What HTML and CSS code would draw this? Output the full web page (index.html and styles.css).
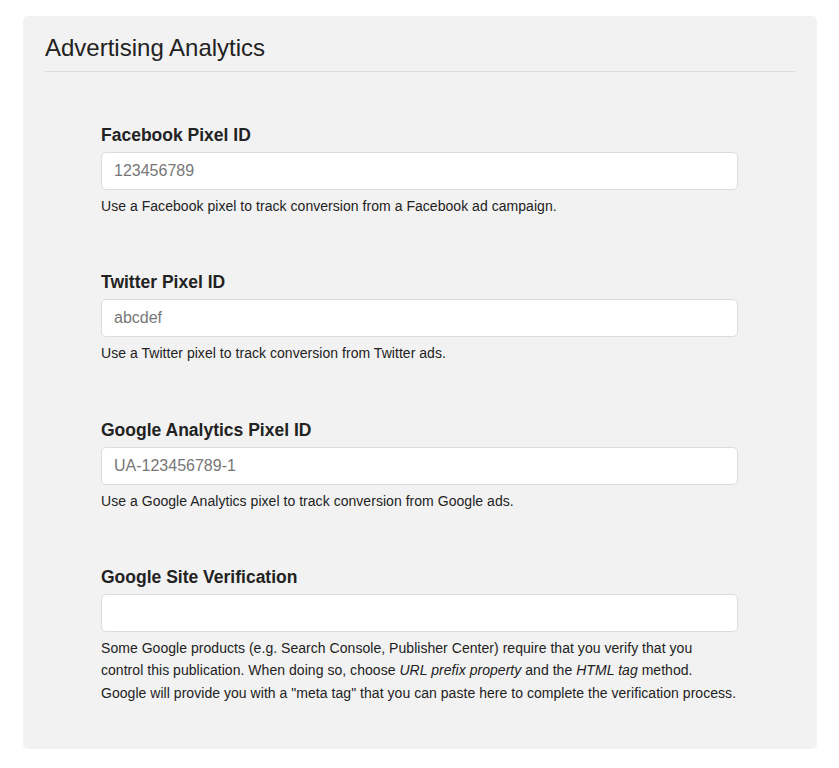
FILE: index.html
```html
<html lang="en">
<head>
    <meta charset="UTF-8">
    <meta name="viewport" content="width=device-width, initial-scale=1.0">
    <title>Advertising Analytics</title>
    <link rel="stylesheet" href="styles.css">
</head>
<body>
    <div class="panel">
        <h2 class="panel-title">Advertising Analytics</h2>
        <div class="form">
            <div class="form-group">
                <label for="facebookPixel">Facebook Pixel ID</label>
                <input type="text" id="facebookPixel" class="input-field" placeholder="123456789">
                <p class="help">Use a Facebook pixel to track conversion from a Facebook ad campaign.</p>
            </div>

            <div class="form-group">
                <label for="twitterPixel">Twitter Pixel ID</label>
                <input type="text" id="twitterPixel" class="input-field" placeholder="abcdef">
                <p class="help">Use a Twitter pixel to track conversion from Twitter ads.</p>
            </div>

            <div class="form-group">
                <label for="googlePixel">Google Analytics Pixel ID</label>
                <input type="text" id="googlePixel" class="input-field" placeholder="UA-123456789-1">
                <p class="help">Use a Google Analytics pixel to track conversion from Google ads.</p>
            </div>

            <div class="form-group last">
                <label for="googleVerification">Google Site Verification</label>
                <input type="text" id="googleVerification" class="input-field">
                <p class="help">Some Google products (e.g. Search Console, Publisher Center) require that you verify that you<br>
                control this publication. When doing so, choose <em>URL prefix property</em> and the <em>HTML tag</em> method.<br>
                Google will provide you with a "meta tag" that you can paste here to complete the verification process.</p>
            </div>
        </div>
    </div>
</body>
</html>
```

FILE: styles.css
```css
body {
    font-family: "Liberation Sans", Arial, sans-serif;
    color: #222;
    background-color: white;
    margin: 0;
}
.panel {
    background-color: #f2f2f2;
    border-radius: 5px;
    margin: 16px 22px 0 23px;
    padding: 18px 22px 45px 22px;
}
.panel-title {
    font-size: 24px;
    font-weight: normal;
    line-height: 1.2;
    margin: 0;
    padding-bottom: 8px;
    border-bottom: 1px solid #dcdcdc;
}
.form {
    padding: 51px 57px 0 56px;
}
.form-group {
    display: flex;
    flex-direction: column;
    margin-bottom: 53px;
}
.form-group.last {
    margin-bottom: 0;
}
.form-group label {
    font-size: 17.5px;
    font-weight: bold;
    line-height: 24px;
    margin-bottom: 5px;
}
.input-field {
    height: 38px;
    box-sizing: border-box;
    padding: 6px 12px;
    font-family: "Liberation Sans", Arial, sans-serif;
    font-size: 16px;
    color: #333;
    background-color: white;
    border: 1px solid #dcdcdc;
    border-radius: 5px;
}
.input-field::placeholder {
    color: #777;
}
.help {
    font-size: 14px;
    letter-spacing: 0.04px;
    line-height: 1.6;
    color: #222;
    margin: 5px 0 0 0;
}
```
